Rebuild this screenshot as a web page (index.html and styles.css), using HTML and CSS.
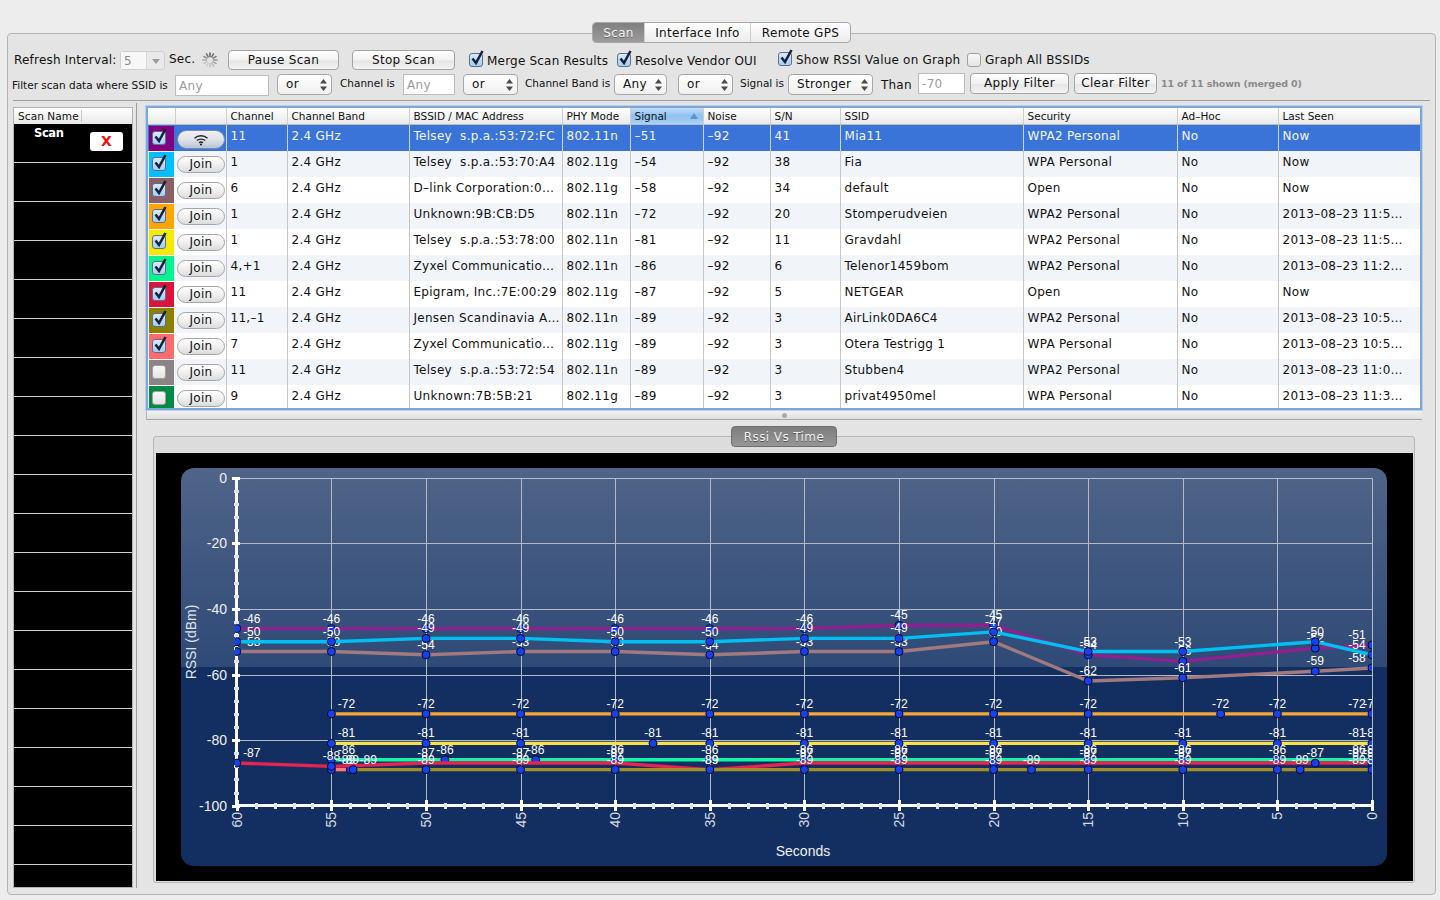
FILE: index.html
```html
<!DOCTYPE html>
<html>

<head>
  <title>Wi-Fi Scanner</title>
  <link rel="stylesheet" href="styles.css">
</head>

<body>
  <svg class="defs" width="0" height="0">
    <symbol id="tick" viewBox="0 0 18 18">
      <path d="M4.5 9.5 L8 14 L14.5 2" fill="none" stroke="#16233c" stroke-width="2.6" />
    </symbol>
    <symbol id="updown" viewBox="0 0 7 12">
      <path d="M3.5 0 L7 4.5 H0 Z M3.5 12 L7 7.5 H0 Z" fill="#4a4a4a" />
    </symbol>
  </svg>

  <main class="panel">
    <nav class="tabs">
      <span class="tab active">Scan</span>
      <span class="tab info">Interface Info</span>
      <span class="tab gps">Remote GPS</span>
    </nav>

    <div class="toolbar row-one">
      <label class="lbl lbl-refresh">Refresh Interval:</label>
      <span class="combo"><span class="combo-val">5</span><span class="combo-arrow"></span></span>
      <label class="lbl lbl-sec">Sec.</label>
      <svg class="spinner" viewBox="0 0 16 16">
        <g stroke-width="1.5" stroke-linecap="round">
          <path d="M8 1V4.5" stroke="#5c5c5c" />
          <path d="M11.5 1.9L9.8 4.9" stroke="#6e6e6e" />
          <path d="M14.1 4.5L11.1 6.2" stroke="#808080" />
          <path d="M15 8H11.5" stroke="#929292" />
          <path d="M14.1 11.5L11.1 9.8" stroke="#a4a4a4" />
          <path d="M11.5 14.1L9.8 11.1" stroke="#b6b6b6" />
          <path d="M8 15V11.5" stroke="#c4c4c4" />
          <path d="M4.5 14.1L6.2 11.1" stroke="#cccccc" />
          <path d="M1.9 11.5L4.9 9.8" stroke="#c4c4c4" />
          <path d="M1 8H4.5" stroke="#a8a8a8" />
          <path d="M1.9 4.5L4.9 6.2" stroke="#8c8c8c" />
          <path d="M4.5 1.9L6.2 4.9" stroke="#707070" />
        </g>
      </svg>
      <button class="btn btn-pause">Pause Scan</button>
      <button class="btn btn-stop">Stop Scan</button>
      <span class="cb on cb-merge"><svg><use href="#tick" /></svg></span>
      <label class="lbl lbl-merge">Merge Scan Results</label>
      <span class="cb on cb-vendor"><svg><use href="#tick" /></svg></span>
      <label class="lbl lbl-vendor">Resolve Vendor OUI</label>
      <span class="cb on cb-rssi"><svg><use href="#tick" /></svg></span>
      <label class="lbl lbl-rssi">Show RSSI Value on Graph</label>
      <span class="cb cb-all"></span>
      <label class="lbl lbl-all">Graph All BSSIDs</label>
    </div>

    <div class="toolbar row-two">
      <label class="lbl small lbl-ssid">Filter scan data where SSID is</label>
      <span class="field f-ssid">Any</span>
      <span class="select s-or1">or<svg><use href="#updown" /></svg></span>
      <label class="lbl small lbl-chan">Channel is</label>
      <span class="field f-chan">Any</span>
      <span class="select s-or2">or<svg><use href="#updown" /></svg></span>
      <label class="lbl small lbl-band">Channel Band is</label>
      <span class="select s-any">Any<svg><use href="#updown" /></svg></span>
      <span class="select s-or3">or<svg><use href="#updown" /></svg></span>
      <label class="lbl small lbl-signal">Signal is</label>
      <span class="select s-stronger">Stronger<svg><use href="#updown" /></svg></span>
      <label class="lbl lbl-than">Than</label>
      <span class="field f-than">-70</span>
      <button class="btn btn-apply">Apply Filter</button>
      <button class="btn btn-clear">Clear Filter</button>
      <span class="shown">11 of 11 shown (merged 0)</span>
    </div>

    <div class="sep"></div>

    <div class="content">
      <aside class="scans">
        <div class="scans-head"><span>Scan Name</span></div>
        <div class="scan-row first"><span class="scan-name">Scan</span><span class="scan-x">X</span></div>
        <div class="scan-row"></div><div class="scan-row"></div><div class="scan-row"></div><div class="scan-row"></div>
        <div class="scan-row"></div><div class="scan-row"></div><div class="scan-row"></div><div class="scan-row"></div>
        <div class="scan-row"></div><div class="scan-row"></div><div class="scan-row"></div><div class="scan-row"></div>
        <div class="scan-row"></div><div class="scan-row"></div><div class="scan-row"></div><div class="scan-row"></div>
        <div class="scan-row"></div><div class="scan-row"></div><div class="scan-row"></div>
      </aside>
      <div class="vsplit"></div>

      <section class="right">
        <div class="ring">
          <table class="grid">
            <colgroup>
              <col class="c-check"><col class="c-join"><col class="c-chan"><col class="c-band"><col class="c-bssid">
              <col class="c-phy"><col class="c-sig"><col class="c-noise"><col class="c-sn"><col class="c-ssid">
              <col class="c-sec"><col class="c-adhoc"><col class="c-seen">
            </colgroup>
            <thead>
              <tr>
                <th></th><th></th><th>Channel</th><th>Channel Band</th><th>BSSID / MAC Address</th>
                <th>PHY Mode</th><th class="sorted">Signal<span class="sort-up"></span></th><th>Noise</th><th>S/N</th><th>SSID</th>
                <th>Security</th><th>Ad–Hoc</th><th>Last Seen</th>
              </tr>
            </thead>
            <tbody>
              <tr class="selected">
                <td class="swatch-cell"><div class="swatch sw-1"><span class="cb on"><svg><use href="#tick" /></svg></span></div></td>
                <td class="join-cell"><button class="join wifi"><svg viewBox="0 0 16 12" width="16" height="12"><g fill="none" stroke="#222" stroke-width="1.4"><path d="M1.5 4.2C5 1 11 1 14.5 4.2" /><path d="M3.8 6.5C6 4.6 10 4.6 12.2 6.5" /><path d="M6 8.7C7.2 7.8 8.8 7.8 10 8.7" /></g><circle cx="8" cy="10.5" r="1.1" fill="#222" /></svg></button></td>
                <td>11</td><td>2.4 GHz</td><td>Telsey  s.p.a.:53:72:FC</td><td>802.11n</td><td>–51</td><td>–92</td><td>41</td><td>Mia11</td><td>WPA2 Personal</td><td>No</td><td>Now</td>
              </tr>
              <tr>
                <td class="swatch-cell"><div class="swatch sw-2"><span class="cb on"><svg><use href="#tick" /></svg></span></div></td>
                <td class="join-cell"><button class="join">Join</button></td>
                <td>1</td><td>2.4 GHz</td><td>Telsey  s.p.a.:53:70:A4</td><td>802.11g</td><td>–54</td><td>–92</td><td>38</td><td>Fia</td><td>WPA Personal</td><td>No</td><td>Now</td>
              </tr>
              <tr>
                <td class="swatch-cell"><div class="swatch sw-3"><span class="cb on"><svg><use href="#tick" /></svg></span></div></td>
                <td class="join-cell"><button class="join">Join</button></td>
                <td>6</td><td>2.4 GHz</td><td>D–link Corporation:0…</td><td>802.11g</td><td>–58</td><td>–92</td><td>34</td><td>default</td><td>Open</td><td>No</td><td>Now</td>
              </tr>
              <tr>
                <td class="swatch-cell"><div class="swatch sw-4"><span class="cb on"><svg><use href="#tick" /></svg></span></div></td>
                <td class="join-cell"><button class="join">Join</button></td>
                <td>1</td><td>2.4 GHz</td><td>Unknown:9B:CB:D5</td><td>802.11n</td><td>–72</td><td>–92</td><td>20</td><td>Stomperudveien</td><td>WPA2 Personal</td><td>No</td><td>2013–08–23 11:5…</td>
              </tr>
              <tr>
                <td class="swatch-cell"><div class="swatch sw-5"><span class="cb on"><svg><use href="#tick" /></svg></span></div></td>
                <td class="join-cell"><button class="join">Join</button></td>
                <td>1</td><td>2.4 GHz</td><td>Telsey  s.p.a.:53:78:00</td><td>802.11n</td><td>–81</td><td>–92</td><td>11</td><td>Gravdahl</td><td>WPA2 Personal</td><td>No</td><td>2013–08–23 11:5…</td>
              </tr>
              <tr>
                <td class="swatch-cell"><div class="swatch sw-6"><span class="cb on"><svg><use href="#tick" /></svg></span></div></td>
                <td class="join-cell"><button class="join">Join</button></td>
                <td>4,+1</td><td>2.4 GHz</td><td>Zyxel Communicatio…</td><td>802.11n</td><td>–86</td><td>–92</td><td>6</td><td>Telenor1459bom</td><td>WPA2 Personal</td><td>No</td><td>2013–08–23 11:2…</td>
              </tr>
              <tr>
                <td class="swatch-cell"><div class="swatch sw-7"><span class="cb on"><svg><use href="#tick" /></svg></span></div></td>
                <td class="join-cell"><button class="join">Join</button></td>
                <td>11</td><td>2.4 GHz</td><td>Epigram, Inc.:7E:00:29</td><td>802.11g</td><td>–87</td><td>–92</td><td>5</td><td>NETGEAR</td><td>Open</td><td>No</td><td>Now</td>
              </tr>
              <tr>
                <td class="swatch-cell"><div class="swatch sw-8"><span class="cb on"><svg><use href="#tick" /></svg></span></div></td>
                <td class="join-cell"><button class="join">Join</button></td>
                <td>11,–1</td><td>2.4 GHz</td><td>Jensen Scandinavia A…</td><td>802.11n</td><td>–89</td><td>–92</td><td>3</td><td>AirLink0DA6C4</td><td>WPA2 Personal</td><td>No</td><td>2013–08–23 10:5…</td>
              </tr>
              <tr>
                <td class="swatch-cell"><div class="swatch sw-9"><span class="cb on"><svg><use href="#tick" /></svg></span></div></td>
                <td class="join-cell"><button class="join">Join</button></td>
                <td>7</td><td>2.4 GHz</td><td>Zyxel Communicatio…</td><td>802.11g</td><td>–89</td><td>–92</td><td>3</td><td>Otera Testrigg 1</td><td>WPA Personal</td><td>No</td><td>2013–08–23 10:5…</td>
              </tr>
              <tr>
                <td class="swatch-cell"><div class="swatch sw-10"><span class="cb"></span></div></td>
                <td class="join-cell"><button class="join">Join</button></td>
                <td>11</td><td>2.4 GHz</td><td>Telsey  s.p.a.:53:72:54</td><td>802.11n</td><td>–89</td><td>–92</td><td>3</td><td>Stubben4</td><td>WPA2 Personal</td><td>No</td><td>2013–08–23 11:0…</td>
              </tr>
              <tr>
                <td class="swatch-cell"><div class="swatch sw-11"><span class="cb"></span></div></td>
                <td class="join-cell"><button class="join">Join</button></td>
                <td>9</td><td>2.4 GHz</td><td>Unknown:7B:5B:21</td><td>802.11g</td><td>–89</td><td>–92</td><td>3</td><td>privat4950mel</td><td>WPA Personal</td><td>No</td><td>2013–08–23 11:3…</td>
              </tr>
            </tbody>
          </table>
        </div>
        <div class="hsplit"><span class="handle"></span></div>

        <div class="chart-box">
          <div class="chart-tab">Rssi Vs Time</div>
          <svg id="rssi-chart" class="chart" viewBox="156 453 1257 428" width="1257" height="428"></svg>
        </div>
      </section>
    </div>
  </main>

  <script src="chart.js"></script>
</body>

</html>
```

FILE: styles.css
```css
*, *::before, *::after {
  box-sizing: border-box;
}
html, body {
  margin: 0;
  height: 900px;
  overflow: hidden;
}
body {
  background: #ededed;
  color: #111;
  font-size: 12px;
  font-family: 'DejaVu Sans', sans-serif;
}
.defs {
  position: absolute;
}

.panel {
  margin: 33px 4px 0 7px;
  height: 862px;
  background: #e4e4e4;
  border: 1px solid #b4b4b4;
  border-radius: 4px;
}

/* tabs */
.tabs {
  display: flex;
  width: 259px;
  height: 21px;
  margin: -12px auto 0;
  background: linear-gradient(#ffffff, #ececec);
  border: 1px solid #a8a8a8;
  border-radius: 4px;
  overflow: hidden;
}
.tab {
  text-align: center;
  line-height: 20px;
  letter-spacing: 0.3px;
  border-right: 1px solid #cfcfcf;
}
.tab.active {
  width: 52px;
  color: #f4f4f4;
  background: linear-gradient(#7f7f7f, #9c9c9c);
  text-shadow: 0 1px 0 #666;
}
.tab.info {
  width: 106px;
}
.tab.gps {
  flex: 1;
  border-right: none;
}

/* toolbar rows */
.toolbar {
  display: flex;
  align-items: center;
}
.row-one {
  height: 20px;
  margin-top: 7px;
  padding-left: 6px;
}
.row-two {
  height: 21px;
  margin-top: 4px;
  padding-left: 4px;
}
.lbl {
  white-space: nowrap;
  letter-spacing: 0.2px;
  flex: none;
}
.lbl.small {
  font-size: 10.5px;
  letter-spacing: 0;
}
.lbl-refresh { width: 106px; }
.lbl-sec { width: 24px; margin-left: 4px; margin-top: -2px; }
.lbl-merge { width: 121px; margin-left: 4px; margin-top: 1px; }
.lbl-vendor { width: 124px; margin-left: 4px; margin-top: 1px; }
.lbl-rssi { width: 164px; margin-left: 4px; }
.lbl-all { width: 105px; margin-left: 4px; margin-top: -1px; }
.lbl-ssid { width: 163px; margin-top: 1px; }
.lbl-chan { width: 55px; margin-left: 8px; margin-top: -3px; }
.lbl-band { width: 85px; margin-left: 7px; margin-top: -3px; }
.lbl-signal { width: 44px; margin-left: 7px; margin-top: -3px; }
.lbl-than { width: 31px; margin-left: 8px; margin-top: 1px; }

.combo {
  display: flex;
  flex: none;
  width: 45px;
  height: 19px;
  margin-left: 0;
  background: #e9e9e9;
  border: 1px solid #cfcfcf;
  border-radius: 3px;
}
.combo-val {
  width: 26px;
  padding-left: 3px;
  line-height: 18px;
  color: #8a8a8a;
  background: #f7f7f7;
  border-right: 1px solid #d8d8d8;
}
.combo-arrow {
  width: 0;
  height: 0;
  margin: 7px 0 0 5px;
  border: 4px solid transparent;
  border-top: 5px solid #9a9a9a;
  border-bottom: none;
}
.spinner {
  flex: none;
  width: 16px;
  height: 16px;
  margin-left: 9px;
}

.btn {
  flex: none;
  height: 20px;
  padding: 0;
  font: inherit;
  letter-spacing: 0.3px;
  color: #111;
  background: linear-gradient(#ffffff, #f1f1f1 50%, #e6e6e6 55%, #f4f4f4);
  border: 1px solid #a4a4a4;
  border-radius: 4px;
}
.btn-pause { width: 111px; margin-left: 10px; }
.btn-stop { width: 103px; margin-left: 13px; }
.btn-apply { width: 99px; margin-left: 5px; margin-top: -3px; height: 21px; }
.btn-clear { width: 83px; margin-left: 5px; margin-top: -3px; height: 21px; }

.cb {
  position: relative;
  display: block;
  flex: none;
  width: 14px;
  height: 14px;
  background: linear-gradient(#f8f8f8, #e4e4e4);
  border: 1px solid #a0a0a0;
  border-radius: 3px;
}
.cb.on {
  background: linear-gradient(#dbe9f9, #a5cdf3);
  border-color: #5d6f8c;
}
.cb svg {
  position: absolute;
  left: -2px;
  top: -5px;
  width: 18px;
  height: 18px;
}
.cb-merge { margin-left: 14px; }
.cb-vendor { margin-left: 9px; }
.cb-rssi { margin-left: 19px; margin-top: -2px; }
.cb-all { margin-left: 7px; margin-top: -1px; }

.field {
  flex: none;
  height: 21px;
  padding: 2px 0 0 3px;
  line-height: 16px;
  letter-spacing: 0.3px;
  color: #9a9a9a;
  background: #fff;
  border: 1px solid #bdbdbd;
}
.f-ssid { width: 94px; margin-left: 0; margin-top: 1px; }
.f-chan { width: 52px; margin-left: 8px; }
.f-than { width: 47px; margin-left: 6px; margin-top: -3px; }

.select {
  display: flex;
  flex: none;
  align-items: center;
  justify-content: space-between;
  height: 21px;
  padding: 0 4px 2px 8px;
  letter-spacing: 0.3px;
  background: linear-gradient(#ffffff, #f0f0f0);
  border: 1px solid #a8a8a8;
  border-radius: 4px;
}
.select svg {
  width: 7px;
  height: 12px;
  margin-top: 2px;
}
.s-or1 { width: 55px; margin-left: 8px; }
.s-or2 { width: 55px; margin-left: 8px; }
.s-any { width: 53px; margin-left: 4px; }
.s-or3 { width: 55px; margin-left: 11px; }
.s-stronger { width: 85px; margin-left: 4px; }

.shown {
  margin-left: 4px;
  margin-top: -2px;
  font-size: 9.5px;
  font-weight: bold;
  letter-spacing: -0.15px;
  white-space: nowrap;
  color: #8a8a8a;
}

.sep {
  height: 1px;
  margin: 5px 5px 0;
  background: #9e9e9e;
}

.content {
  display: flex;
  height: 787px;
}

/* scan list on the left */
.scans {
  flex: none;
  width: 120px;
  height: 781px;
  margin: 6px 0 0 5px;
  overflow: hidden;
  background: #000;
  border: 1px solid #b2b2b2;
}
.scans-head {
  height: 16px;
  padding-left: 4px;
  font-size: 10.5px;
  letter-spacing: 0.1px;
  white-space: nowrap;
  background: linear-gradient(#ffffff, #e8e8e8);
}
.scans-head span {
  display: inline-block;
  width: 64px;
  height: 12px;
  line-height: 12px;
  margin-top: 2px;
  border-right: 1px solid #c8c8c8;
}
.scan-row {
  display: flex;
  align-items: flex-start;
  height: 39px;
  border-bottom: 1px solid #cfcfcf;
}
.scan-name {
  width: 76px;
  padding: 2px 0 0 20px;
  font-size: 11.5px;
  font-weight: bold;
  letter-spacing: -0.4px;
  color: #fff;
}
.scan-x {
  width: 33px;
  height: 19px;
  margin-top: 8px;
  font-size: 14px;
  font-weight: bold;
  line-height: 19px;
  text-align: center;
  color: #ee1111;
  background: #fff;
  border-radius: 3px;
}

.vsplit {
  flex: none;
  width: 1px;
  height: 785px;
  margin: 2px 0 0 3px;
  background: #9a9a9a;
}

.right {
  flex: none;
  width: 1278px;
  margin-left: 8px;
  padding-top: 4px;
}

/* network table */
.ring {
  height: 306px;
  overflow: hidden;
  background: #fff;
  border: 1px solid #b9d1ec;
  outline: 2px solid #7ba8d9;
  outline-offset: -3px;
  padding: 2px;
}
.grid {
  width: 1272px;
  table-layout: fixed;
  border-collapse: collapse;
}
.c-check { width: 27px; }
.c-join { width: 51px; }
.c-chan { width: 61px; }
.c-band { width: 122px; }
.c-bssid { width: 153px; }
.c-phy { width: 68px; }
.c-sig { width: 73px; }
.c-noise { width: 67px; }
.c-sn { width: 70px; }
.c-ssid { width: 183px; }
.c-sec { width: 154px; }
.c-adhoc { width: 101px; }
.c-seen { width: 142px; }

.grid th {
  position: relative;
  height: 16px;
  padding: 1px 0 0 4px;
  font-size: 10.5px;
  font-weight: normal;
  line-height: 14px;
  letter-spacing: 0;
  text-align: left;
  white-space: nowrap;
  background: linear-gradient(#ffffff, #e9e9e9);
  border-right: 1px solid #cdcdcd;
  border-bottom: 1px solid #bcbcbc;
}
.grid th.sorted {
  background: linear-gradient(#c2dcf6, #8fc0ef 50%, #a9d2f6);
}
.sort-up {
  position: absolute;
  right: 5px;
  top: 5px;
  border: 4px solid transparent;
  border-top: none;
  border-bottom: 6px solid #5f94c8;
}
.grid td {
  height: 26px;
  padding: 4px 0 0 4px;
  overflow: hidden;
  line-height: 15px;
  letter-spacing: 0.28px;
  white-space: pre;
  vertical-align: top;
  border-right: 1px solid #c6c6c6;
}
.grid td.swatch-cell,
.grid td.join-cell {
  padding: 0;
}
.grid td.swatch-cell {
  border-right: none;
}
.grid tbody tr:nth-child(even) {
  background: #f1f5fa;
}
.grid tr.selected {
  color: #f2f6fc;
  background: #3a74d8;
}
.grid tr.selected td {
  border-right-color: #c9d6ec;
}
.swatch {
  display: flex;
  align-items: center;
  width: 25px;
  height: 25px;
  margin: 1px 0 0 1px;
  padding-left: 3px;
}
.sw-1 { background: #800080; }
.sw-2 { background: #00bfff; }
.sw-3 { background: #8b5f65; }
.sw-4 { background: #ffa500; }
.sw-5 { background: #f5e900; }
.sw-6 { background: #00f58c; }
.sw-7 { background: #dc143c; }
.sw-8 { background: #8b8000; }
.sw-9 { background: #ff6a6a; }
.sw-10 { background: #8b8386; }
.sw-11 { background: #008b45; }

.join {
  display: block;
  width: 48px;
  height: 17px;
  margin: 5px 0 0 2px;
  padding: 0;
  font: inherit;
  line-height: 14px;
  letter-spacing: 0.3px;
  color: #111;
  background: linear-gradient(#ffffff, #f0f0f0 50%, #dcdcdc);
  border: 1px solid #a6a6a6;
  border-radius: 9px;
}
.join.wifi {
  height: 19px;
  padding-top: 3px;
  background: linear-gradient(#eef0f3, #dfe2e7 50%, #b9c4d6);
  border-color: #7f8ba0;
  border-radius: 10px;
}

.hsplit {
  display: flex;
  align-items: center;
  justify-content: center;
  height: 9px;
  margin: 0 1px;
  background: linear-gradient(#f2f2f2, #dedede);
  border-left: 1px solid #b4b4b4;
  border-bottom: 1px solid #a6a6a6;
}
.handle {
  width: 5px;
  height: 5px;
  background: #a9a9a9;
  border-radius: 50%;
}

/* chart */
.chart-box {
  width: 1262px;
  height: 447px;
  margin: 16px 0 0 8px;
  background: #dcdcdc;
  border: 1px solid #b8b8b8;
  border-radius: 3px;
}
.chart-tab {
  width: 106px;
  height: 21px;
  margin: -11px auto 0;
  font-size: 12px;
  line-height: 20px;
  letter-spacing: 0.4px;
  text-align: center;
  color: #f2f2f2;
  text-shadow: 0 1px 0 #555;
  background: linear-gradient(#7d7d7d, #969696);
  border: 1px solid #6f6f6f;
  border-radius: 4px;
}
.chart {
  display: block;
  margin: 6px 0 0 2px;
  font-family: 'Liberation Sans', sans-serif;
}
```

FILE: chart.js
```js
var NS = 'http://www.w3.org/2000/svg';
var svg = document.querySelector('#rssi-chart');

function X(sec) { return 1372 - sec * 18.92; }
function Y(dbm) { return 477.7 - dbm * 3.28; }

function add(parent, tag, attrs, text) {
  var el = document.createElementNS(NS, tag);
  for (var key in attrs) el.setAttribute(key, attrs[key]);
  if (text !== undefined) el.textContent = text;
  parent.appendChild(el);
  return el;
}

// background
add(svg, 'rect', { x: 156, y: 453, width: 1257, height: 428, fill: '#000' });
var defs = add(svg, 'defs', {});
var grad = add(defs, 'linearGradient', { id: 'glass', x1: 0, y1: 0, x2: 0, y2: 1 });
add(grad, 'stop', { offset: '0', 'stop-color': '#4f6488' });
add(grad, 'stop', { offset: '0.5', 'stop-color': '#2f4a77' });
add(grad, 'stop', { offset: '0.5', 'stop-color': '#132f61' });
add(grad, 'stop', { offset: '1', 'stop-color': '#132f61' });
var clip = add(defs, 'clipPath', { id: 'plot' });
add(clip, 'rect', { x: 235, y: 470, width: 1137, height: 336 });
add(svg, 'rect', { x: 181, y: 468, width: 1206, height: 398, rx: 13, fill: 'url(#glass)' });

// grid lines
[0, -20, -40, -60, -80].forEach(function (v) {
  add(svg, 'rect', { x: 237, y: Math.round(Y(v)), width: 1135, height: 1, fill: '#b4bac6' });
});
for (var s = 55; s >= 0; s -= 5) {
  add(svg, 'rect', { x: Math.round(X(s)), y: 478, width: 1, height: 327, fill: '#b4bac6' });
}

// axes
add(svg, 'rect', { x: 235, y: 478, width: 3, height: 328, fill: '#fff' });
add(svg, 'rect', { x: 235, y: 804, width: 1139, height: 3, fill: '#fff' });
for (var v = 0; v >= -100; v -= 4) {
  if (v % 20 === 0) {
    add(svg, 'rect', { x: 232, y: Math.round(Y(v)) - 1, width: 8, height: 3, fill: '#fff' });
    add(svg, 'text', { x: 227, y: Y(v) + 5, 'text-anchor': 'end', 'font-size': 14, fill: '#f0f0f0' }, String(v));
  } else {
    add(svg, 'rect', { x: 234, y: Math.round(Y(v)) - 1, width: 5, height: 3, fill: '#dfe3ea' });
  }
}
for (var t = 0; t <= 60; t++) {
  if (t % 5 === 0) {
    add(svg, 'rect', { x: Math.round(X(t)) - 1, y: 800, width: 3, height: 11, fill: '#fff' });
    add(svg, 'text', { x: X(t) + 5, y: 812, transform: 'rotate(-90 ' + (X(t) + 5) + ' 812)', 'text-anchor': 'end', 'font-size': 14, fill: '#d5dae3' }, String(t));
  } else {
    add(svg, 'rect', { x: Math.round(X(t)) - 1, y: 803, width: 3, height: 6, fill: '#dfe3ea' });
  }
}

// series in drawing order: points are [seconds, dBm], a third item false leaves out the dot
var series = [
  { color: '#8f2090', pts: [[60, -46], [55, -46], [50, -46], [45, -46], [40, -46], [35, -46], [30, -46], [25, -45], [20, -45], [15, -54], [10, -56], [3, -52], [0, -51]] },
  { color: '#a07a7e', pts: [[60, -53], [55, -53], [50, -54], [45, -53], [40, -53], [35, -54], [30, -53], [25, -53], [20, -50], [15, -62], [10, -61], [3, -59], [0, -58]] },
  { color: '#00bff3', pts: [[60, -50], [55, -50], [50, -49], [45, -49], [40, -50], [35, -50], [30, -49], [25, -49], [20, -47], [15, -53], [10, -53], [3, -50], [0, -54]] },
  { color: '#f7a738', twice: true, pts: [[55, -72], [50, -72], [45, -72], [40, -72], [35, -72], [30, -72], [25, -72], [20, -72], [15, -72], [8, -72], [5, -72], [0, -72]] },
  { color: '#f7e348', twice: true, pts: [[55, -81], [50, -81], [45, -81], [38, -81], [35, -81], [30, -81], [25, -81], [20, -81], [15, -81], [10, -81], [5, -81], [0, -81]] },
  { color: '#14f5a5', twice: true, pts: [[55, -86], [49, -86], [44.2, -86], [40, -86], [35, -86], [30, -86], [25, -86], [20, -86], [15, -86], [10, -86], [5, -86], [0, -86]] },
  { color: '#ff7a7a', pts: [[55, -89], [54, -89]] },
  { color: '#e6244f', twice: true, pts: [[60, -87], [55, -88], [50, -87, false], [45, -87, false], [40, -87, false], [35, -89, false], [30, -87, false], [25, -87, false], [20, -87], [15, -87, false], [10, -87, false], [3, -87], [0, -87]] },
  { color: '#a09028', twice: true, pts: [[53.85, -89], [50, -89], [45, -89], [40, -89], [35, -89], [30, -89], [25, -89], [20, -89], [18, -89], [15, -89], [10, -89], [5, -89], [3.8, -89], [0, -89]] }
];

var plot = add(svg, 'g', { 'clip-path': 'url(#plot)' });

series.forEach(function (line) {
  var d = line.pts.map(function (p) { return X(p[0]) + ',' + Y(p[1]); }).join(' ');
  add(plot, 'polyline', { points: d, fill: 'none', stroke: line.color, 'stroke-width': 3.4 });

  line.pts.forEach(function (p, i) {
    if (p[2] !== false) {
      add(plot, 'circle', { cx: X(p[0]), cy: Y(p[1]), r: 4, fill: '#1541f5', stroke: '#050a1e', 'stroke-width': 1 });
    }
    var dx = 0;
    if (i === 0) dx = 15;
    if (p[0] === 0) dx = -15;
    var attrs = { x: X(p[0]) + dx, y: Y(p[1]) - 6, 'text-anchor': 'middle', 'font-size': 12, fill: '#fff' };
    add(plot, 'text', attrs, String(p[1]));
    if (p[0] === 0 && line.twice) {
      attrs.x = X(0);
      add(plot, 'text', attrs, String(p[1]));
    }
  });
});

// axis titles
add(svg, 'text', { x: 803, y: 856, 'text-anchor': 'middle', 'font-size': 14, fill: '#eef0f4' }, 'Seconds');
add(svg, 'text', { x: 196, y: 642, transform: 'rotate(-90 196 642)', 'text-anchor': 'middle', 'font-size': 14, fill: '#dfe3ea' }, 'RSSI (dBm)');
```
